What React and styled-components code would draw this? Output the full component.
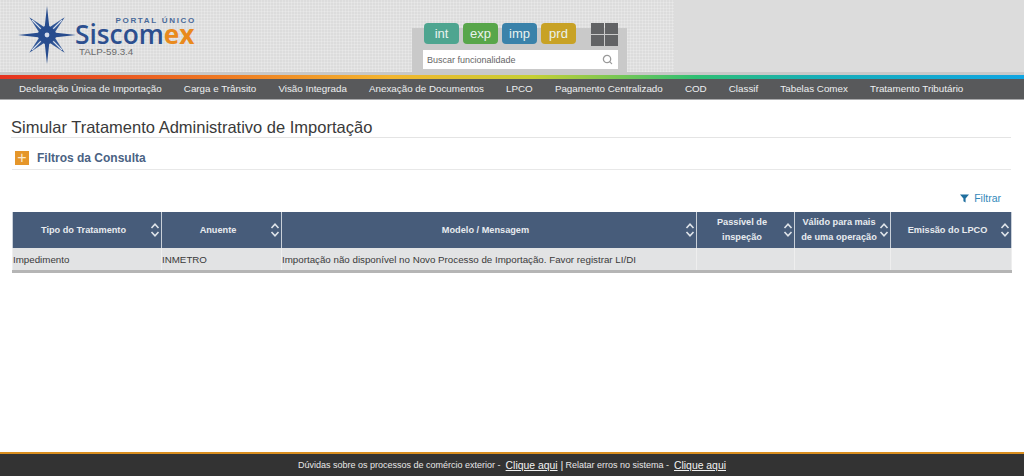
import React from 'react';
import styled, { createGlobalStyle } from 'styled-components';
import { Search } from 'lucide-react';

const GlobalStyle = createGlobalStyle`
  html, body {
    margin: 0;
    padding: 0;
    background: #fff;
    font-family: "Liberation Sans", Arial, sans-serif;
  }
`;

const modules = [
  { label: 'int', color: '#4ea590' },
  { label: 'exp', color: '#58a64a' },
  { label: 'imp', color: '#3a82aa' },
  { label: 'prd', color: '#c8a225' },
];

const menu = [
  'Declaração Única de Importação',
  'Carga e Trânsito',
  'Visão Integrada',
  'Anexação de Documentos',
  'LPCO',
  'Pagamento Centralizado',
  'COD',
  'Classif',
  'Tabelas Comex',
  'Tratamento Tributário',
];

const columns = [
  { title: 'Tipo do Tratamento', width: 149 },
  { title: 'Anuente', width: 120 },
  { title: 'Modelo / Mensagem', width: 415 },
  { title: <>Passível de<br />inspeção</>, width: 98 },
  { title: <>Válido para mais<br />de uma operação</>, width: 96 },
  { title: 'Emissão do LPCO', width: 121 },
];

const rows = [
  ['Impedimento', 'INMETRO', 'Importação não disponível no Novo Processo de Importação. Favor registrar LI/DI', '', '', ''],
];

// eight pointed star: four long points, four short ones with a pale stripe
function StarLogo() {
  const long = '0,-29 2.2,-9 6.5,-6 1,0 -6.5,-6 -2.2,-9';
  const short = '0,-25 4,-6 0,0 -4,-6';
  return (
    <svg width="62" height="62" viewBox="-31 -31 62 62">
      {[45, 135, 225, 315].map((a) => (
        <g key={a} transform={`rotate(${a})`}>
          <polygon points={short} fill="#2f5596" />
          <path d="M0 -21 L0 -3" stroke="#dfe5ee" strokeWidth="1.3" />
        </g>
      ))}
      {[0, 90, 180, 270].map((a) => (
        <polygon key={a} points={long} fill="#274c8e" transform={`rotate(${a})`} />
      ))}
      <circle r="2.4" fill="#d5dcea" />
    </svg>
  );
}

function GridIcon() {
  return (
    <svg width="27" height="23" viewBox="0 0 27 23">
      <g fill="#626365">
        <rect width="13" height="11" />
        <rect x="14" width="13" height="11" />
        <rect y="12" width="13" height="11" />
        <rect x="14" y="12" width="13" height="11" />
      </g>
    </svg>
  );
}

function SortIcon() {
  return (
    <svg width="10" height="16" viewBox="0 0 10 16" fill="none" stroke="#dfe4ea" strokeWidth="1.6">
      <path d="M1.5 6 5 2.2 8.5 6" />
      <path d="M1.5 10 5 13.8 8.5 10" />
    </svg>
  );
}

function FunnelIcon() {
  return (
    <svg width="9" height="9" viewBox="0 0 10 10">
      <path d="M0 .5h10L6.2 5v4.5L3.8 8V5z" fill="#1f6f9f" />
    </svg>
  );
}

export default function App() {
  return (
    <Page>
      <GlobalStyle />
      <Header>
        <Brand>
          <StarLogo />
          <Wordmark>
            <Portal>PORTAL ÚNICO</Portal>
            <Name>Siscom<Highlight>ex</Highlight></Name>
            <Version>TALP-59.3.4</Version>
          </Wordmark>
        </Brand>
        <Launcher>
          <Chips>
            {modules.map((m) => (
              <Chip key={m.label} $color={m.color}>{m.label}</Chip>
            ))}
            <GridSlot><GridIcon /></GridSlot>
          </Chips>
          <SearchBox>
            <SearchText>Buscar funcionalidade</SearchText>
            <Search size={11} color="#9a9a9a" strokeWidth={2.8} />
          </SearchBox>
        </Launcher>
      </Header>
      <GreyBand />
      <Rainbow />
      <Nav>
        {menu.map((item) => (
          <NavItem key={item}>{item}</NavItem>
        ))}
      </Nav>

      <Main>
        <Title>Simular Tratamento Administrativo de Importação</Title>
        <FilterBar>
          <PlusBox>+</PlusBox>
          <FilterTitle>Filtros da Consulta</FilterTitle>
        </FilterBar>
        <Actions>
          <FilterLink><FunnelIcon /> Filtrar</FilterLink>
        </Actions>
        <ResultTable>
          <colgroup>
            {columns.map((c, i) => (
              <col key={i} width={c.width} />
            ))}
          </colgroup>
          <thead>
            <tr>
              {columns.map((c, i) => (
                <HeadCell key={i}>
                  <HeadInner>
                    <HeadLabel>{c.title}</HeadLabel>
                    <SortIcon />
                  </HeadInner>
                </HeadCell>
              ))}
            </tr>
          </thead>
          <tbody>
            {rows.map((row, r) => (
              <tr key={r}>
                {row.map((cell, i) => (
                  <BodyCell key={i}>{cell}</BodyCell>
                ))}
              </tr>
            ))}
          </tbody>
        </ResultTable>
      </Main>

      <Footer>
        <span>Dúvidas sobre os processos de comércio exterior -</span>
        <FooterLink>Clique aqui</FooterLink>
        <Pipe>|</Pipe>
        <span>Relatar erros no sistema -</span>
        <FooterLink>Clique aqui</FooterLink>
      </Footer>
    </Page>
  );
}

const Page = styled.div`
  width: 1024px;
  height: 476px;
  display: flex;
  flex-direction: column;
  overflow: hidden;
  background: #fff;
`;

const Header = styled.header`
  height: 72px;
  display: flex;
  background-color: #dcdcdc;
  background-image:
    repeating-linear-gradient(0deg, rgba(255, 255, 255, 0.2) 0 1px, transparent 1px 3px),
    repeating-linear-gradient(90deg, rgba(255, 255, 255, 0.2) 0 1px, transparent 1px 3px);
  background-size: 674px 100%;
  background-repeat: no-repeat;
`;

const Brand = styled.div`
  width: 412px;
  display: flex;
  align-items: flex-start;
  padding: 4px 0 0 16px;
  box-sizing: border-box;
`;

const Wordmark = styled.div`
  display: flex;
  flex-direction: column;
  margin: 14px 0 0 -3px;
  width: 121px;
`;

const Portal = styled.div`
  font-size: 8px;
  line-height: 6px;
  letter-spacing: 1.7px;
  color: #4a6a9a;
  text-align: right;
  font-weight: 700;
  white-space: nowrap;
`;

const Name = styled.div`
  font-family: "Open Sans", sans-serif;
  font-size: 26.3px;
  line-height: 20px;
  color: #2c4f8f;
  font-weight: 600;
  white-space: nowrap;
`;

const Highlight = styled.span`
  color: #e98a1d;
  font-weight: 700;
`;

const Version = styled.div`
  font-size: 9.8px;
  line-height: 10px;
  margin: 3px 0 0 4px;
  color: #6b6b6b;
`;

const Launcher = styled.div`
  width: 215px;
  height: 44px;
  margin-top: 28px;
  padding: 0 9px 0 11px;
  box-sizing: border-box;
  background: #c9c9c9;
  display: flex;
  flex-direction: column;
`;

const Chips = styled.div`
  display: flex;
  gap: 4px;
  margin: -5px 0 0 1px;
  height: 24px;
`;

const Chip = styled.div`
  width: 35px;
  height: 21px;
  border-radius: 4px;
  background: ${(p) => p.$color};
  color: #e9f2ee;
  font-size: 13px;
  line-height: 21px;
  text-align: center;
`;

const GridSlot = styled.div`
  margin-left: 11px;
  line-height: 0;
`;

const SearchBox = styled.div`
  height: 19px;
  margin-top: 3px;
  width: 195px;
  background: #fff;
  display: flex;
  align-items: center;
  justify-content: space-between;
  padding: 0 5px 0 4px;
  box-sizing: border-box;
`;

const SearchText = styled.span`
  font-size: 9px;
  color: #666;
`;

const GreyBand = styled.div`
  height: 3px;
  background: #c8c8c8;
`;

const Rainbow = styled.div`
  height: 4px;
  background: linear-gradient(90deg, #e5321f 0%, #ee7a22 22%, #f3b52e 38%, #c6cf33 52%, #2fbf74 68%, #17aeb8 80%, #10a5e2 100%);
`;

const Nav = styled.nav`
  height: 21px;
  display: flex;
  align-items: center;
  gap: 22.15px;
  padding: 0 0 1px 19px;
  background: #58595b;
  border-bottom: 1px solid #a9aaac;
  box-sizing: border-box;
`;

const NavItem = styled.span`
  color: #eef0f1;
  font-size: 9.8px;
  white-space: nowrap;
`;

const Main = styled.main`
  flex: 1;
  padding: 18px 13px 0 12px;
  display: flex;
  flex-direction: column;
`;

const Title = styled.h1`
  margin: 0 0 0 -1px;
  height: 19px;
  font-size: 16.5px;
  line-height: 19px;
  font-weight: 400;
  color: #3a3a3a;
  border-bottom: 1px solid #e4e4e4;
`;

const FilterBar = styled.div`
  height: 23px;
  padding: 8px 0 0 3px;
  display: flex;
  align-items: center;
  border-bottom: 1px solid #e8e8e8;
`;

const PlusBox = styled.span`
  width: 14px;
  height: 14px;
  background: #e5962a;
  color: #fbe9cf;
  font-size: 16px;
  line-height: 14px;
  text-align: center;
  margin-right: 8px;
`;

const FilterTitle = styled.span`
  font-size: 12px;
  font-weight: 700;
  color: #4a6283;
`;

const Actions = styled.div`
  height: 42px;
  display: flex;
  justify-content: flex-end;
  align-items: flex-start;
  padding: 22px 10px 0 0;
  box-sizing: border-box;
`;

const FilterLink = styled.span`
  display: flex;
  align-items: center;
  gap: 5px;
  font-size: 10.5px;
  color: #3389ba;
`;

const ResultTable = styled.table`
  width: 999px;
  table-layout: fixed;
  border-collapse: collapse;
`;

const HeadCell = styled.th`
  height: 36px;
  padding: 0;
  background: #475c7a;
  border-left: 1px solid #c9d0d9;
  border-right: 1px solid #c9d0d9;
  color: #e8ebef;
  font-size: 9.2px;
  font-weight: 700;
`;

const HeadInner = styled.div`
  display: flex;
  align-items: center;
  padding: 0 1px 0 4px;
`;

const HeadLabel = styled.span`
  flex: 1;
  line-height: 15px;
  text-align: center;
  white-space: nowrap;
`;

const BodyCell = styled.td`
  height: 22px;
  padding: 0;
  background: #e2e3e4;
  border-left: 1px solid #eeeeee;
  border-right: 1px solid #eeeeee;
  border-bottom: 3px solid #b5b5b5;
  color: #3a3a3a;
  font-size: 9.75px;
  white-space: nowrap;
`;

const Footer = styled.footer`
  height: 24px;
  box-sizing: border-box;
  border-top: 2px solid #d98e1f;
  background: #333;
  color: #e8e8e8;
  font-size: 9px;
  display: flex;
  align-items: center;
  justify-content: center;
`;

const FooterLink = styled.a`
  font-size: 10.4px;
  color: #f2f2f2;
  text-decoration: underline;
  margin-left: 5px;
`;

const Pipe = styled.span`
  font-size: 11px;
  margin: 0 2px 0 3px;
`;
